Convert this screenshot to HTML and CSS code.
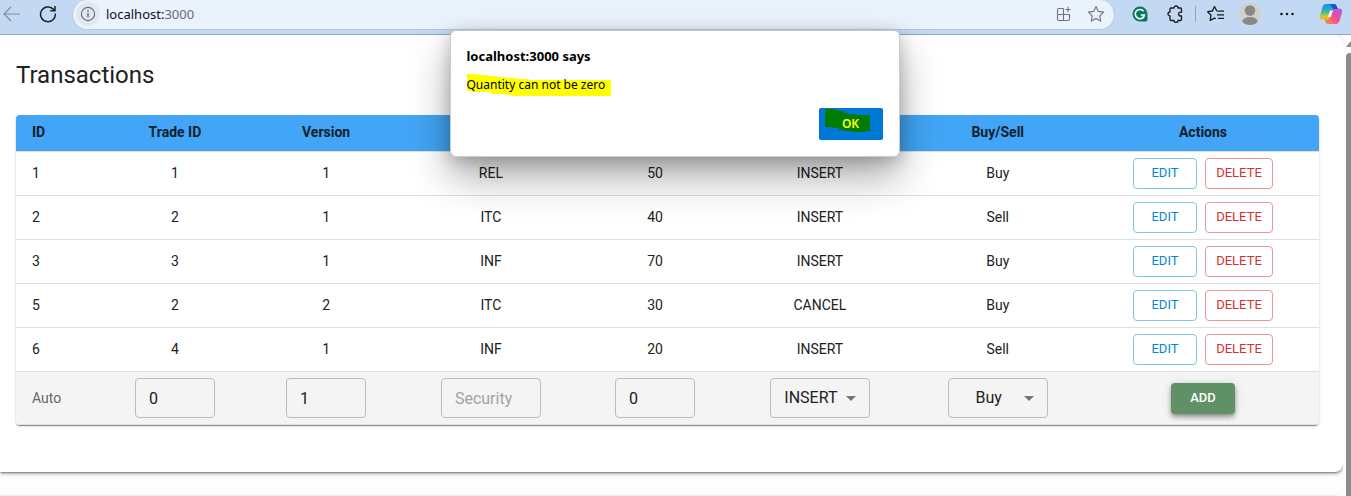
FILE: index.html
```html
<!DOCTYPE html>
<html lang="en">
<head>
<meta charset="utf-8">
<title>Transactions</title>
<link rel="stylesheet" href="styles.css">
</head>
<body>
<header class="toolbar">
  <button class="tool back" aria-label="Back"><svg width="18" height="16" viewBox="0 0 18 16"><path d="M8 1 1 8l7 7M1 8h16" fill="none" stroke="#7e90a8" stroke-width="1.2"/></svg></button>
  <button class="tool reload" aria-label="Reload"><svg width="18" height="18" viewBox="0 0 18 18"><path d="M16.300 8.500a7.400 7.400 0 1 1-2.300-4.600L16 5.700M16 1v4.700h-4.700" fill="none" stroke="#222" stroke-width="1.5"/></svg></button>
  <div class="address">
    <button class="tool info" aria-label="Site information"><svg width="16" height="16" viewBox="0 0 16 16"><circle cx="8" cy="8" r="6.600" fill="none" stroke="#6b6e73" stroke-width="1.100"/><path d="M8 7v4.300" stroke="#6b6e73" stroke-width="1.500"/><circle cx="8" cy="5" r=".9" fill="#6b6e73"/></svg></button>
    <span class="url">localhost:<span class="port">3000</span></span>
    <button class="tool apps" aria-label="Apps"><svg width="16" height="16" viewBox="0 0 16 16"><path d="M7.500 2.500H3a1.500 1.500 0 0 0-1.500 1.500v9A1.500 1.500 0 0 0 3 14.500h9a1.500 1.500 0 0 0 1.500-1.500V8.500h-12M7.500 2.500v12M12 .8v5.400M9.300 3.500h5.400" fill="none" stroke="#6f7277" stroke-width="1.100"/></svg></button>
    <button class="tool favorite" aria-label="Add to favorites"><svg width="18" height="18" viewBox="0 0 18 18"><path d="m9 1.500 2.300 4.900 5.300.7-3.900 3.700 1 5.300L9 13.500l-4.700 2.600 1-5.300-3.900-3.700 5.300-.7z" fill="none" stroke="#6f7277" stroke-width="1.100" stroke-linejoin="round"/></svg></button>
  </div>
  <nav class="tools" aria-label="Browser tools">
    <button class="tool" aria-label="Writing assistant"><svg width="16" height="16" viewBox="0 0 16 16"><path d="M8 .5a7.500 7.500 0 0 1 7.500 7.500v5.500a2 2 0 0 1-2 2H8A7.500 7.500 0 0 1 8 .5" fill="#08785f"/><path d="M11.600 5.300A4.600 4.600 0 1 0 12.400 9H8.700M12.400 9l-1.300 3.500" fill="none" stroke="#fff" stroke-width="1.600"/></svg></button>
    <button class="tool" aria-label="Extensions"><svg width="18" height="18" viewBox="0 0 18 18"><path d="M5 3h3a2 2 0 0 1 4 0h2.500q1 0 1 1v3.200h-1a1.900 1.900 0 0 0 0 3.800h1v3.500q0 1-1 1H12a2 2 0 0 1-4 0H5q-1 0-1-1V11a2 2 0 0 1 0-4V4q0-1 1-1z" fill="none" stroke="#1b1b1b" stroke-width="1.300" stroke-linejoin="round"/></svg></button>
    <span class="divider"></span>
    <button class="tool" aria-label="Favorites"><svg width="18" height="18" viewBox="0 0 18 18"><path d="M10.600 5.800H9.700L7.500 1.500 5.400 6l-4.700.7L4 10.200l-.8 5.200 4.300-2.300 1.300.7M11 6.200h6M10 9.800h7M11 13.300h6" fill="none" stroke="#1b1b1b" stroke-width="1.300" stroke-linejoin="round"/></svg></button>
    <button class="tool profile" aria-label="Profile"><svg width="22" height="22" viewBox="0 0 22 22"><clipPath id="avatar"><circle cx="11" cy="11" r="11"/></clipPath><g clip-path="url(#avatar)"><path d="M0 0h22v22H0z" fill="#d2d0ce"/><circle cx="11" cy="7.500" r="5.200" fill="#8a8886"/><ellipse cx="11" cy="19" rx="7.800" ry="5" fill="#8a8886"/></g></svg></button>
    <button class="tool" aria-label="Settings and more"><svg width="16" height="4" viewBox="0 0 16 4"><g fill="#1b1b1b"><circle cx="2.500" cy="2" r="1.300"/><circle cx="8" cy="2" r="1.300"/><circle cx="13.500" cy="2" r="1.300"/></g></svg></button>
    <button class="tool copilot" aria-label="Copilot"><svg width="24" height="22" viewBox="0 0 24 22">
      <defs>
        <linearGradient id="cool" x1="0" y1="0" x2="0" y2="1"><stop offset="0" stop-color="#168bef"/><stop offset=".5" stop-color="#35b8a6"/><stop offset=".8" stop-color="#d2cd21"/><stop offset="1" stop-color="#f7b40a"/></linearGradient>
        <linearGradient id="warm" x1="1" y1="0" x2="0" y2="1"><stop offset="0" stop-color="#a95df2"/><stop offset=".5" stop-color="#ee4f8c"/><stop offset="1" stop-color="#ff9248"/></linearGradient>
        <linearGradient id="deep" x1="0" y1="0" x2="1" y2="0"><stop offset="0" stop-color="#1389e5"/><stop offset="1" stop-color="#173ec8"/></linearGradient>
      </defs>
      <path d="M7 1h8q2 0 2.600 2L19 7h-3q-2.500 0-3.300 2.500L11 15q-.6 1.500-2.500 1.500H4q-4 0-3-4L3.500 4Q4.500 1 7 1" fill="url(#cool)"/>
      <path d="M17 21H9q-2 0-2.600-2L5.500 16.500H8q2.500 0 3.300-2.500L13.500 7q.6-1.500 2.500-1.500h4q4 0 3 4L20.500 18q-1 3-3.500 3" fill="url(#warm)"/>
      <path d="M8 1h7q2 0 2.600 2l1 3H15q-2 0-2.600-2Q11.500 1 8 1" fill="url(#deep)"/>
      <path d="M11 7.500h3l-2.200 6.500h-3z" fill="#f5edf1"/>
    </svg></button>
  </nav>
</header>

<div class="viewport">
  <main class="page">
    <section class="card">
      <h1 class="title">Transactions</h1>
      <table class="grid">
        <colgroup><col class="c-id"><col class="c-trade"><col class="c-version"><col class="c-security"><col class="c-quantity"><col class="c-action"><col class="c-side"><col class="c-actions"></colgroup>
        <thead><tr><th>ID</th><th>Trade ID</th><th>Version</th><th>Security</th><th>Quantity</th><th>Action</th><th>Buy/Sell</th><th>Actions</th></tr></thead>
        <tbody>
          <tr><td>1</td><td>1</td><td>1</td><td>REL</td><td>50</td><td>INSERT</td><td>Buy</td><td><div class="actions"><button class="btn edit">EDIT</button><button class="btn delete">DELETE</button></div></td></tr>
          <tr><td>2</td><td>2</td><td>1</td><td>ITC</td><td>40</td><td>INSERT</td><td>Sell</td><td><div class="actions"><button class="btn edit">EDIT</button><button class="btn delete">DELETE</button></div></td></tr>
          <tr><td>3</td><td>3</td><td>1</td><td>INF</td><td>70</td><td>INSERT</td><td>Buy</td><td><div class="actions"><button class="btn edit">EDIT</button><button class="btn delete">DELETE</button></div></td></tr>
          <tr><td>5</td><td>2</td><td>2</td><td>ITC</td><td>30</td><td>CANCEL</td><td>Buy</td><td><div class="actions"><button class="btn edit">EDIT</button><button class="btn delete">DELETE</button></div></td></tr>
          <tr><td>6</td><td>4</td><td>1</td><td>INF</td><td>20</td><td>INSERT</td><td>Sell</td><td><div class="actions"><button class="btn edit">EDIT</button><button class="btn delete">DELETE</button></div></td></tr>
        </tbody>
        <tfoot>
          <tr>
            <td>Auto</td>
            <td><input class="field short" type="text" value="0" aria-label="Trade ID"></td>
            <td><input class="field short" type="text" value="1" aria-label="Version"></td>
            <td><input class="field" type="text" placeholder="Security" aria-label="Security"></td>
            <td><input class="field short" type="text" value="0" aria-label="Quantity"></td>
            <td><span class="choice"><select class="field" aria-label="Action"><option>INSERT</option><option>CANCEL</option></select><svg class="caret" width="10" height="5" viewBox="0 0 10 5"><path d="m0 0 5 5 5-5z" fill="#757575"/></svg></span></td>
            <td><span class="choice"><select class="field" aria-label="Buy or sell"><option>Buy</option><option>Sell</option></select><svg class="caret" width="10" height="5" viewBox="0 0 10 5"><path d="m0 0 5 5 5-5z" fill="#757575"/></svg></span></td>
            <td><div class="actions"><button class="btn add">ADD</button></div></td>
          </tr>
        </tfoot>
      </table>
    </section>
    <section class="card next"></section>
  </main>
  <div class="scrollbar"><svg width="10" height="6" viewBox="0 0 10 6"><path d="M0 6 5 0l5 6z" fill="#8b8b8b"/></svg><span class="thumb"></span></div>
</div>

<div class="alert" role="alertdialog" aria-labelledby="alert-title" aria-describedby="alert-text">
  <h2 class="alert-title" id="alert-title">localhost:3000 says</h2>
  <p class="alert-text" id="alert-text"><svg class="marker" width="145" height="22" viewBox="0 0 145 22"><path d="M0 0h11v1h10v1h9v1h10v1h10v1h12v1h82v16H45v-1h-5v-1H24v-2H5v-1H0z" fill="#ff0"/></svg><span class="alert-label">Quantity can not be zero</span></p>
  <button class="ok"><svg class="marker" width="46" height="24" viewBox="0 0 46 24"><path d="M0 0h10v1h4v1h5v2h4v1h8v1h14v16h-5v1H27v-1h-9v-1h-4v-2h-6v-1H0z" fill="#007c00"/></svg><span class="ok-label">OK</span></button>
</div>
</body>
</html>
```

FILE: styles.css
```css
* { box-sizing: border-box; }

body {
  margin: 0;
  height: 100vh;
  display: flex;
  flex-direction: column;
  overflow: hidden;
  position: relative;
  background: #fdfdfd;
  color: #212121;
  font: 14px/20px Roboto, sans-serif;
}

button, input, select { font: inherit; color: inherit; }
svg { display: block; }

/* Browser toolbar */
.toolbar {
  display: flex;
  flex: none;
  height: 35px;
  padding: 0 8px 6px 3px;
  background: #c2d8f3;
  border-bottom: 1px solid #8fa5c1;
}
.tool {
  display: grid;
  place-items: center;
  flex: none;
  padding: 0;
  border: 0;
  background: none;
}
.reload { margin: 0 15px 0 18px; }
.address {
  flex: 1;
  display: flex;
  align-items: center;
  gap: 15px;
  height: 30px;
  padding: 0 9px 1px 3px;
  background: #eaf2fc;
  border: 1px solid #bac6d6;
  border-top: 0;
  border-radius: 15px;
}
.info {
  width: 24px;
  height: 24px;
  border-radius: 12px;
  background: #dfe7f1;
}
.url {
  flex: 1;
  margin-left: -9px;
  color: #111;
  font: 13px/20px "Noto Sans", sans-serif;
}
.port { color: #666b72; }
.tools {
  display: flex;
  align-items: center;
  gap: 18px;
  margin-left: 17px;
}
.divider {
  width: 1px;
  height: 16px;
  margin: 0 -7px;
  background: #91a3ba;
}
.profile { margin-left: -4px; }
.copilot { margin-left: 6px; }

/* Page */
.viewport {
  flex: 1;
  min-height: 0;
  display: flex;
}
.page {
  flex: 1;
  display: flex;
  flex-direction: column;
  gap: 24px;
  overflow: hidden;
}
.card {
  flex: none;
  padding: 24px 24px 47px 16px;
  background: #fff;
  border-radius: 0 8px 8px 0;
  box-shadow: 0 2px 1px -1px #0003, 0 1px 3px #0004, 0 2px 4px #0003;
}
.title {
  margin: 0 0 24px;
  font-size: 24px;
  font-weight: 400;
  line-height: 32px;
}
.scrollbar {
  flex: none;
  width: 8px;
  padding: 6px 0 0 3px;
  display: flex;
  flex-direction: column;
  gap: 6px;
  overflow: hidden;
  background: #fcfcfc;
}
.thumb {
  flex: 1;
  width: 8px;
  background: #8b8b8b;
  border-radius: 4px 4px 0 0;
}

/* Transactions table */
.grid {
  width: 100%;
  table-layout: fixed;
  border-spacing: 0;
  border-radius: 4px;
  overflow: hidden;
  box-shadow: 0 2px 1px -1px #0003, 0 1px 1px #0004, 0 1px 3px #0002;
}
.c-id { width: 6.5%; }
.c-trade { width: 11.4%; }
.c-version { width: 11.8%; }
.c-security { width: 13.5%; }
.c-quantity { width: 11.7%; }
.c-action { width: 13.6%; }
.c-side { width: 13.7%; }
.c-actions { width: 17.8%; }
th, td {
  padding: 6px 16px;
  text-align: center;
  border-bottom: 1px solid #e0e0e0;
}
th:first-child, td:first-child { text-align: left; }
th {
  padding: 7px 16px 9px;
  background: #42a5f5;
  font-weight: 700;
  color: #10202c;
}
tbody td { height: 44px; padding: 0 16px 1px; }
tfoot td { background: #f4f4f4; height: 53px; }
tfoot td:first-child { color: #666; }

.actions {
  display: flex;
  justify-content: center;
  gap: 8px;
}
.btn {
  min-width: 64px;
  height: 31px;
  padding: 0 9px 1px;
  border: 1px solid;
  border-radius: 4px;
  background: none;
  font-size: 13px;
}
.edit { color: #0288d1; border-color: #7fc3e8; }
.delete { min-width: 68px; color: #d32f2f; border-color: #e99797; }
.add {
  border: 0;
  background: #609065;
  color: #fff;
  font-weight: 500;
  box-shadow: 0 2px 4px -1px #0004, 0 4px 5px #0003, 0 1px 10px #0002;
}

.field {
  display: block;
  width: 100px;
  height: 40px;
  margin: 0 auto;
  padding: 0 13px;
  border: 1px solid #bbb;
  border-radius: 4px;
  background: none;
  font-size: 16px;
  line-height: 24px;
}
.field::placeholder { color: #a2a2a2; opacity: 1; }
.short { width: 80px; }
.choice {
  display: grid;
  width: 100px;
  margin: 0 auto;
  align-items: center;
}
.choice > * { grid-area: 1 / 1; }
.choice .field {
  appearance: none;
  padding: 0 31px 0 13px;
  text-align: center;
  text-align-last: center;
}
.caret { justify-self: end; margin-right: 14px; pointer-events: none; }

/* Browser alert */
.alert {
  position: absolute;
  top: 30px;
  left: calc(50% - 226px);
  width: 450px;
  padding: 15px 16px 16px;
  display: flex;
  flex-direction: column;
  background: #fff;
  border: 1px solid #ccc;
  border-radius: 6px;
  box-shadow: 0 20px 40px #0005, 0 4px 16px #0003;
  color: #000;
  font: 13px/20px "Noto Sans", sans-serif;
}
.alert-title {
  margin: 0 0 8px;
  font-size: 13px;
  font-weight: 700;
}
.alert-text { margin: 0 0 12px; display: grid; align-items: center; }
.alert-text > *, .ok > * { grid-area: 1 / 1; }
.alert-label, .ok-label { position: relative; }
.alert-label { font-size: 12px; }
.ok {
  align-self: flex-end;
  display: grid;
  align-items: center;
  width: 64px;
  height: 32px;
  padding: 0;
  border: 0;
  border-radius: 2px;
  background: #0078d7;
  color: #ff0;
  font-size: 12px;
  font-weight: 600;
}
.ok .marker { margin: 0 0 6px 6px; }
```
